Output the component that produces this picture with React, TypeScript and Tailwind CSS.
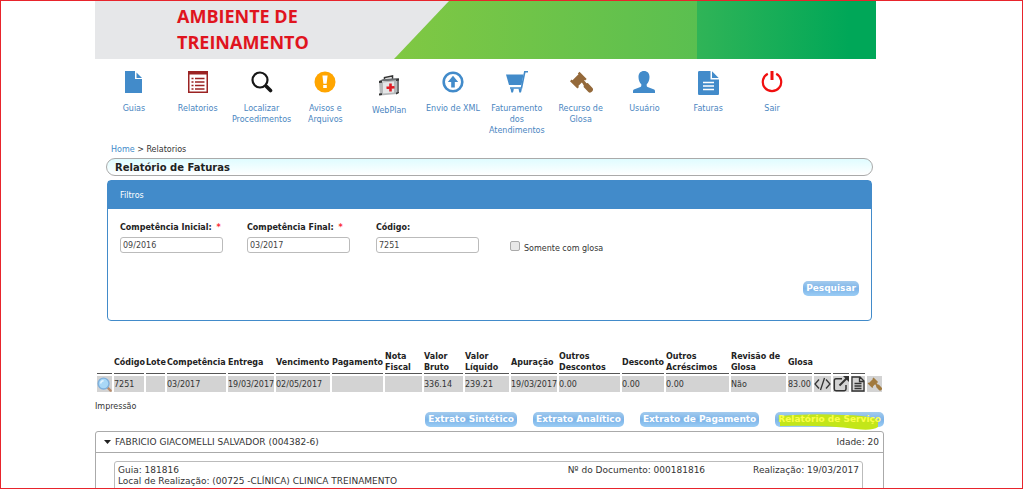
import React from 'react';

const FileIcon = () => (
  <svg className="h-[22px] w-[17px]" viewBox="0 0 17 22" fill="currentColor">
    <path d="M0 0h10v8h7v14H0z" />
    <path d="M11.500 1.500L17 7h-5.500z" />
  </svg>
);

const ListIcon = () => (
  <svg className="h-[22px] w-5" viewBox="0 0 20 22" fill="none" stroke="currentColor">
    <path strokeWidth={1.500} d="M.75.75h18.500v20.500H.75z" />
    <path strokeWidth={3} d="M0 2h20" />
    <path strokeWidth={1.500} d="M7 7.500h9.500M7 11h9.500M7 14.500h9.500M7 18h9.500M3.500 7.500h2M3.500 11h2M3.500 14.500h2M3.500 18h2" />
  </svg>
);

const SearchIcon = () => (
  <svg className="h-[22px] w-[22px]" viewBox="0 0 22 22" fill="none" stroke="currentColor">
    <circle cx="9" cy="9" r="7.500" strokeWidth={2.200} />
    <path strokeWidth={3.600} strokeLinecap="round" d="M15.500 15.500l4 4" />
  </svg>
);

const AlertIcon = () => (
  <svg className="h-[22px] w-[22px]" viewBox="0 0 22 22">
    <circle cx="11" cy="11" r="10.500" fill="currentColor" />
    <path fill="#fff" d="M8.400 4.500h5.200l-1 8.200H9.400zM9.200 14h3.600v3H9.200z" />
  </svg>
);

const FirstAidIcon = () => (
  <svg className="h-[22px] w-[22px]" viewBox="0 0 22 22">
    <path fill="none" stroke="#333" strokeWidth={1.500} d="M6.500 5V2.500l8-1.500v3" />
    <path fill="#6d7073" d="M1 6l4-2 16-1-2 4z" />
    <path fill="#b5b8ba" d="M1 7l18-2v14L2 20.500z" />
    <path fill="#77797b" d="M19 5l2-1v13l-2 2z" />
    <path fill="#e4e6e7" d="M5 7.500l11-1v11l-11 1z" />
    <path fill="#333" d="M1 6l3-.3v2L1 8zM18 4.500l3-1v2l-3 .5zM1 18.500l3-.3V20l-3 .6zM18 17.500l3-.6V18l-3 1.500z" />
    <path stroke="#e01b24" strokeWidth={2.600} d="M12.500 8.500v8M8.500 12.800l8-.6" />
  </svg>
);

const UploadIcon = () => (
  <svg className="h-[22px] w-[22px]" viewBox="0 0 22 22">
    <circle cx="11" cy="11" r="9.300" fill="none" stroke="currentColor" strokeWidth={2.600} />
    <path fill="currentColor" d="M11 4.700l5.200 6.300h-3.400v5.500H9.200V11H5.800z" />
  </svg>
);

const CartIcon = () => (
  <svg className="h-[22px] w-[22px]" viewBox="0 0 22 22" fill="currentColor">
    <path d="M0 3.500h17.500l-2 10.500H3z" />
    <path fill="none" stroke="currentColor" strokeWidth={1.600} d="M22 .8h-3.200L15.500 17H4" />
    <path d="M4.500 17.500h3.200v1.200L7 21.500H5.300zM12.500 17.500h3.200v1.200L15 21.500h-1.700z" />
  </svg>
);

const GavelIcon = ({ className }: { className: string }) => (
  <svg className={className} viewBox="0 0 24 24" fill="currentColor">
    <path d="M10.500 0.800l7.200 7.200-1.600 1.600-.8-.6-6 6 .7.900-1.600 1.500L1 10.200l1.600-1.600.9.700 6-6-.7-.9z" />
    <path d="M12 10l2-2 3.500 4.300 1.300-.2 4.700 4.900c1 1.200.6 2.600-.4 3.600-1.100 1.200-2.700 1.400-3.700.4L14.600 16l.2-1.500z" />
  </svg>
);

const UserIcon = () => (
  <svg className="h-[22px] w-[22px]" viewBox="0 0 22 22" fill="currentColor">
    <path d="M11 0c3.400 0 5.500 2.200 5.500 6 0 3-1.200 5.800-2.800 7.200v1.600c0 .6.300 1 .9 1.200l5.900 2.300c1 .4 1.500 1 1.500 2V22H0v-1.700c0-1 .5-1.600 1.500-2L7.400 16c.6-.2.900-.6.900-1.200v-1.600C6.700 11.800 5.500 9 5.500 6c0-3.800 2.100-6 5.500-6z" />
  </svg>
);

const InvoiceIcon = () => (
  <svg className="h-6 w-[21px]" viewBox="0 0 21 24">
    <path fill="currentColor" d="M1.500 0h11v8.500H21v14c0 1-.5 1.500-1.500 1.500h-18C.5 24 0 23.500 0 22.500v-21C0 .5.500 0 1.500 0z" />
    <path fill="currentColor" d="M14 .3L20.700 7H14z" />
    <path stroke="#fff" strokeWidth={1.500} d="M5 11.500h11M5 15h11M5 18.500h11" />
  </svg>
);

const PowerIcon = () => (
  <svg className="h-[22px] w-[22px]" viewBox="0 0 22 22" fill="none" stroke="currentColor">
    <path strokeWidth={2.200} d="M6.800 2.800a9.200 9.200 0 1 0 8.400 0" />
    <path strokeWidth={3} d="M11 0v9" />
  </svg>
);

const LensIcon = () => (
  <svg className="h-[15px] w-[15px]" viewBox="0 0 16 16">
    <path stroke="#b98a68" strokeWidth={2.500} strokeLinecap="round" d="M11.500 11.500l3 3" />
    <circle cx="7" cy="7" r="5.800" fill="#a9d8f7" stroke="#7fb0dc" strokeWidth={1.500} />
    <path fill="none" stroke="#e6f6ff" strokeWidth={1.500} d="M4 7a3 3 0 0 1 3-3" />
  </svg>
);

const CodeIcon = () => (
  <svg className="h-4 w-[17px]" viewBox="0 0 17 16" fill="none" stroke="currentColor" strokeWidth={1.300}>
    <path d="M5 3.500L1 8l4 4.500M12 3.500L16 8l-4 4.500M10.500 2l-4 12" />
  </svg>
);

const ExternalIcon = () => (
  <svg className="h-4 w-4" viewBox="0 0 16 16" fill="none" stroke="currentColor">
    <path strokeWidth={1.500} d="M9 2.800H3c-1.200 0-1.700.6-1.700 1.700V13c0 1.200.6 1.700 1.700 1.700h8.300c1.200 0 1.700-.6 1.700-1.700V9" />
    <path strokeWidth={2} d="M6.500 9.500l7-7" />
    <path fill="currentColor" stroke="none" d="M10 0h6v6z" />
  </svg>
);

const DocumentIcon = () => (
  <svg className="h-4 w-[14px]" viewBox="0 0 14 16" fill="none" stroke="currentColor" strokeWidth={1.300}>
    <path d="M1 1h8l4 4v10H1zM8.500 1v4.500H13M3.500 7.500h7M3.500 10h7M3.500 12.500h7" />
  </svg>
);

const menu = [
  { label: 'Guias', color: 'text-[#428bca]', icon: <FileIcon /> },
  { label: 'Relatorios', color: 'text-[#9b2323]', icon: <ListIcon /> },
  { label: 'Localizar Procedimentos', color: 'text-[#161616]', icon: <SearchIcon /> },
  { label: 'Avisos e Arquivos', color: 'text-[#ffa500]', icon: <AlertIcon /> },
  { label: 'WebPlan', color: 'pt-1', icon: <FirstAidIcon /> },
  { label: 'Envio de XML', color: 'text-[#428bca]', icon: <UploadIcon /> },
  { label: 'Faturamento dos Atendimentos', color: 'text-[#428bca]', icon: <CartIcon /> },
  { label: 'Recurso de Glosa', color: 'text-[#94693a]', icon: <GavelIcon className="h-6 w-6" /> },
  { label: 'Usuário', color: 'text-[#428bca]', icon: <UserIcon /> },
  { label: 'Faturas', color: 'text-[#428bca]', icon: <InvoiceIcon /> },
  { label: 'Sair', color: 'text-[#f00f0f]', icon: <PowerIcon /> },
];

const columns = [
  { title: 'Código', value: '7251', width: 'w-[30px]' },
  { title: 'Lote', value: '', width: 'w-[19px]' },
  { title: 'Competência', value: '03/2017', width: 'w-[59px]' },
  { title: 'Entrega', value: '19/03/2017', width: 'w-[46px]' },
  { title: 'Vencimento', value: '02/05/2017', width: 'w-[54px]' },
  { title: 'Pagamento', value: '', width: 'w-[51px]' },
  { title: 'Nota Fiscal', value: '', width: 'w-[37px]' },
  { title: 'Valor Bruto', value: '336.14', width: 'w-[39px]' },
  { title: 'Valor Líquido', value: '239.21', width: 'w-[44px]' },
  { title: 'Apuração', value: '19/03/2017', width: 'w-[46px]' },
  { title: 'Outros Descontos', value: '0.00', width: 'w-[61px]' },
  { title: 'Desconto', value: '0.00', width: 'w-[42px]' },
  { title: 'Outros Acréscimos', value: '0.00', width: 'w-[63px]' },
  { title: 'Revisão de Glosa', value: 'Não', width: 'w-[55px]' },
  { title: 'Glosa', value: '83.00', width: 'w-[24px]' },
];

const actions = [
  { name: 'XML', icon: <CodeIcon />, width: 'w-[17px]' },
  { name: 'Abrir', icon: <ExternalIcon />, width: 'w-[16px]' },
  { name: 'Documento', icon: <DocumentIcon />, width: 'w-[14px]' },
];

interface FieldProps {
  id: string;
  label: string;
  value: string;
  required?: boolean;
}

function Field({ id, label, value, required }: FieldProps) {
  return (
    <div>
      <label htmlFor={id} className="block font-bold leading-3 whitespace-nowrap text-[#222]">
        {label} {required && <span className="ml-0.5 text-red-500">*</span>}
      </label>
      <input
        id={id}
        type="text"
        defaultValue={value}
        className="mt-[3px] block h-4 w-[103px] rounded-[3px] border border-[#bbb] bg-white px-0.5 text-[8px] text-[#444]"
      />
    </div>
  );
}

function BlueButton({ children }: { children: React.ReactNode }) {
  return (
    <button
      type="button"
      className="relative h-[15px] rounded-[5px] bg-linear-to-b from-[#a3cbee] via-[#7db4e8] to-[#9bcdf5] px-[3px] text-[9px] leading-[15px] font-bold whitespace-nowrap text-white"
    >
      {children}
    </button>
  );
}

export default function App() {
  return (
    <div className="h-screen overflow-hidden border border-[#e8242c] bg-white pr-[138px] pl-[94px] font-['DejaVu_Sans',Verdana,sans-serif] text-[8px] leading-[11px] text-[#333]">
      {/* Banner */}
      <header className="relative mr-2 h-[58px] bg-[#e6e7e9]">
        <svg className="absolute inset-0 h-full w-full" viewBox="0 0 781 58" preserveAspectRatio="none">
          <defs>
            <linearGradient id="light">
              <stop offset="0" stopColor="#80c843" />
              <stop offset="1" stopColor="#5abf50" />
            </linearGradient>
            <linearGradient id="dark">
              <stop offset="0" stopColor="#30b457" />
              <stop offset="0.85" stopColor="#00a758" />
            </linearGradient>
          </defs>
          <path fill="url(#light)" d="M354 0h249v58H299z" />
          <path fill="url(#dark)" d="M602 0h179v58H602z" />
        </svg>
        <h1 className="relative ml-[82px] w-[180px] pt-[2px] font-['Open_Sans','Noto_Sans',sans-serif] text-[18px] leading-[26px] font-bold text-[#e0141e]">
          AMBIENTE DE TREINAMENTO
        </h1>
      </header>

      {/* Menu */}
      <nav className="mr-20 ml-[7px] grid h-[83px] grid-cols-11 pt-3">
        {menu.map((item) => (
          <a key={item.label} href="#" className="flex flex-col items-center text-center text-[#4a86bf]">
            <span className={`flex h-8 shrink-0 items-start ${item.color}`}>{item.icon}</span>
            <span className={item.label === 'WebPlan' ? 'mt-0.5' : ''}>{item.label}</span>
          </a>
        ))}
      </nav>

      <main>
        <div className="ml-4 pt-0.5">
          <a href="#" className="text-[#428bca]">Home</a> &gt; Relatorios
        </div>

        <div className="mr-[11px] ml-[11px]">
          <h2 className="mt-[3px] h-[18px] rounded-full border border-[#aaa] bg-linear-to-b from-[#dffcff] to-white px-2 text-[10px] leading-[17px] font-bold text-[#222]">
            Relatório de Faturas
          </h2>

          {/* Filters */}
          <form className="mt-1 mr-px ml-px rounded-[4px] border border-[#428bca]">
            <div className="bg-[#428bca] px-3 pt-[9px] pb-[7px] leading-3 text-white">Filtros</div>
            <div className="flex h-[72px] items-start pt-[13px] pl-3">
              <div className="w-[127px]"><Field id="inicial" label="Competência Inicial:" value="09/2016" required /></div>
              <div className="w-[129px]"><Field id="final" label="Competência Final:" value="03/2017" required /></div>
              <div className="w-[134px]"><Field id="codigo" label="Código:" value="7251" /></div>
              <label className="flex items-end gap-1 pt-[19px]">
                <input
                  type="checkbox"
                  className="mb-[3px] h-[10px] w-[10px] appearance-none rounded-[2px] border border-[#aaa] bg-[#e8e8e8]"
                />
                Somente com glosa
              </label>
            </div>
            <div className="flex justify-end pr-3 pb-6">
              <BlueButton>Pesquisar</BlueButton>
            </div>
          </form>
        </div>

        {/* Invoices */}
        <table className="mt-7 w-full table-fixed border-separate border-spacing-x-[2px] border-spacing-y-[2px]">
          <thead>
            <tr className="text-left text-[#222]">
              <th className="w-[15px] border-b border-[#555] p-0" />
              {columns.map((column) => (
                <th key={column.title} className={`${column.width} h-[22px] border-b border-[#555] p-0 align-middle`}>
                  {column.title}
                </th>
              ))}
              {actions.map((action) => (
                <th key={action.name} className={`${action.width} border-b border-[#555] p-0`} />
              ))}
              <th className="w-[15px] p-0" />
            </tr>
          </thead>
          <tbody>
            <tr>
              <td className="h-4 bg-[#d3d3d3] p-0">
                <button type="button" aria-label="Detalhar" className="block"><LensIcon /></button>
              </td>
              {columns.map((column) => (
                <td key={column.title} className="bg-[#d3d3d3] p-0 whitespace-nowrap">{column.value}</td>
              ))}
              {actions.map((action) => (
                <td key={action.name} className="bg-[#d3d3d3] p-0">
                  <button type="button" aria-label={action.name} className="block">{action.icon}</button>
                </td>
              ))}
              <td className="bg-[#d3d3d3] p-0">
                <button type="button" aria-label="Glosa" className="block text-[#a17a3f]">
                  <GavelIcon className="h-[15px] w-[15px]" />
                </button>
              </td>
            </tr>
          </tbody>
        </table>

        <div className="mt-[7px]">Impressão</div>
        <div className="flex justify-end gap-4">
          <BlueButton>Extrato Sintético</BlueButton>
          <BlueButton>Extrato Analítico</BlueButton>
          <BlueButton>Extrato de Pagamento</BlueButton>
          <BlueButton>
            <svg className="absolute top-[2px] left-[5px] h-4 w-[98px]" viewBox="0 0 98 16" preserveAspectRatio="none">
              <path fill="#c3e619" d="M0 2Q35-1 62 1q25 0 36 5v7q-6 4-22 2-30-4-76-3z" />
            </svg>
            <span className="relative text-[#fbff4a]">Relatório de Serviço</span>
          </BlueButton>
        </div>

        {/* Patient */}
        <section className="mt-1 rounded-t-[3px] border border-[#aaa] text-[9px]">
          <div className="flex h-[21px] items-center border-b border-[#aaa] pr-1 pl-2">
            <svg className="mr-1 h-1 w-[7px]" viewBox="0 0 7 4"><path fill="#222" d="M0 0h7L3.500 4z" /></svg>
            <span>FABRICIO GIACOMELLI SALVADOR (004382-6)</span>
            <span className="ml-auto">Idade: 20</span>
          </div>
          <div className="mt-2 mr-5 ml-[18px] h-20 rounded-[3px] border border-[#bbb] px-[3px] pt-[3px]">
            <div className="flex">
              <span className="flex-1">Guia: 181816</span>
              <span className="mr-12">Nº do Documento: 000181816</span>
              <span>Realização: 19/03/2017</span>
            </div>
            <div>Local de Realização: (00725 -CLÍNICA) CLINICA TREINAMENTO</div>
          </div>
        </section>
      </main>
    </div>
  );
}
